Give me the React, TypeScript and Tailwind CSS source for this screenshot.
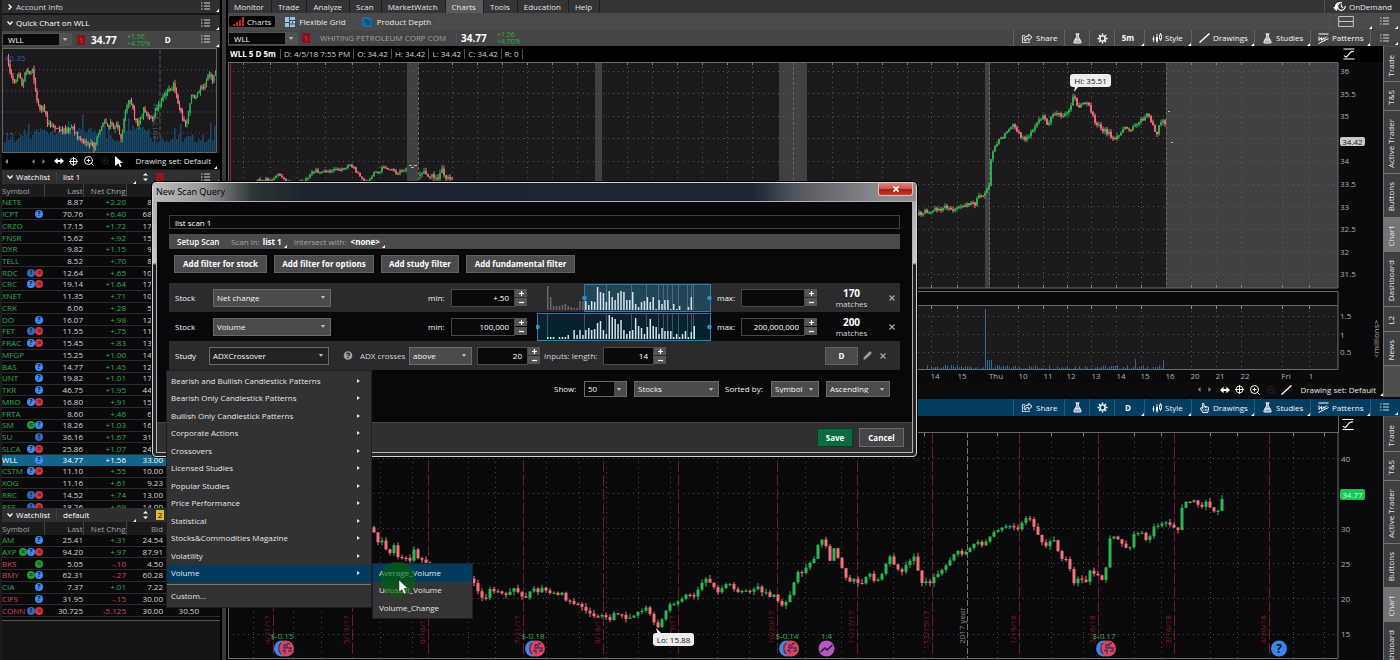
import React, { useState } from 'react';
import { FlaskConical, ZoomIn, Pencil } from 'lucide-react';
import { FaRegHandPointer, FaRegShareSquare, FaQuestionCircle } from 'react-icons/fa';

type Point = [number, number];

interface Quote {
  symbol: string;
  last: string;
  change: string;
  bid: string;
  ask?: string;
  marks?: string;
}

// marks: q = event, p = pending event, r = report, g = split
const LIST_ONE: Quote[] = [
  { symbol: 'NETE', last: '8.87', change: '+2.20', bid: '8.55' },
  { symbol: 'ICPT', last: '70.76', change: '+6.40', bid: '68.10', marks: 'q' },
  { symbol: 'CRZO', last: '17.15', change: '+1.72', bid: '17.00' },
  { symbol: 'FNSR', last: '15.62', change: '+.92', bid: '15.50' },
  { symbol: 'DXR', last: '9.82', change: '+1.15', bid: '9.60' },
  { symbol: 'TELL', last: '8.52', change: '+.70', bid: '8.40' },
  { symbol: 'RDC', last: '12.64', change: '+.65', bid: '10.90', marks: 'pr' },
  { symbol: 'CRC', last: '19.14', change: '+1.64', bid: '17.50', marks: 'qr' },
  { symbol: 'XNET', last: '11.35', change: '+.71', bid: '10.75' },
  { symbol: 'CRK', last: '6.06', change: '+.28', bid: '5.50' },
  { symbol: 'DO', last: '16.07', change: '+.98', bid: '12.50', marks: 'q' },
  { symbol: 'FET', last: '11.55', change: '+.75', bid: '11.00', marks: 'pr' },
  { symbol: 'FRAC', last: '15.45', change: '+.83', bid: '13.50', marks: 'qr' },
  { symbol: 'MFGP', last: '15.25', change: '+1.00', bid: '14.50' },
  { symbol: 'BAS', last: '14.77', change: '+1.45', bid: '12.90', marks: 'q' },
  { symbol: 'UNT', last: '19.82', change: '+1.01', bid: '17.00', marks: 'q' },
  { symbol: 'TKR', last: '46.75', change: '+1.95', bid: '44.00', marks: 'q' },
  { symbol: 'MRO', last: '16.80', change: '+.91', bid: '15.50', marks: 'qr' },
  { symbol: 'FRTA', last: '8.60', change: '+.46', bid: '6.80' },
  { symbol: 'SM', last: '18.26', change: '+1.03', bid: '16.50', marks: 'gq' },
  { symbol: 'SU', last: '36.16', change: '+1.67', bid: '31.50', marks: 'p' },
  { symbol: 'SLCA', last: '25.86', change: '+1.07', bid: '24.50', marks: 'qr' },
  { symbol: 'WLL', last: '34.77', change: '+1.56', bid: '33.00', marks: 'q' },
  { symbol: 'CSTM', last: '11.10', change: '+.55', bid: '10.00', marks: 'qr' },
  { symbol: 'XOG', last: '11.16', change: '+.61', bid: '9.23' },
  { symbol: 'RRC', last: '14.52', change: '+.74', bid: '13.00', marks: 'pr' },
  { symbol: 'RES', last: '18.26', change: '+.69', bid: '14.00', marks: 'pr' },
];

const LIST_DEFAULT: Quote[] = [
  { symbol: 'AM', last: '25.41', change: '+.31', bid: '24.54', marks: 'q' },
  { symbol: 'AXP', last: '94.20', change: '+.97', bid: '87.91', marks: 'gqr' },
  { symbol: 'BKS', last: '5.05', change: '-.10', bid: '4.50', marks: 'g' },
  { symbol: 'BMY', last: '62.31', change: '-.27', bid: '60.28', marks: 'gq' },
  { symbol: 'CIA', last: '7.37', change: '+.01', bid: '7.22', marks: 'q' },
  { symbol: 'CIFS', last: '31.95', change: '-.15', bid: '30.00', marks: 'q' },
  { symbol: 'CONN', last: '30.725', change: '-5.125', bid: '30.00', ask: '30.50', marks: 'pr' },
];

const STUDY_GROUPS = [
  'Bearish and Bullish Candlestick Patterns', 'Bearish Only Candlestick Patterns',
  'Bullish Only Candlestick Patterns', 'Corporate Actions', 'Crossovers', 'Licensed Studies',
  'Popular Studies', 'Price Performance', 'Statistical', 'Stocks&Commodities Magazine',
  'Volatility', 'Volume',
];

const MAIN_TABS = ['Monitor', 'Trade', 'Analyze', 'Scan', 'MarketWatch', 'Charts', 'Tools', 'Education', 'Help'];

const QUICK_PATH: Point[] = [
  [7, 60], [10, 70], [14, 80], [18, 75], [22, 84], [26, 70], [29, 76], [32, 67], [35, 90], [38, 102], [41, 112],
  [44, 106], [48, 126], [52, 124], [57, 128], [60, 133], [66, 130], [72, 128], [78, 138], [84, 144], [90, 143],
  [95, 148], [98, 135], [104, 124], [110, 125], [118, 128], [121, 137], [124, 122], [127, 107], [131, 98],
  [134, 118], [138, 125], [144, 110], [148, 115], [152, 122], [156, 110], [162, 98], [168, 88], [174, 86],
  [180, 108], [184, 124], [188, 118], [191, 95], [195, 100], [200, 90], [205, 86], [208, 72], [212, 80], [216, 70],
];

const INTRADAY_LEFT: Point[] = [
  [254, 181], [262, 180], [272, 180], [278, 174], [282, 178], [290, 184], [305, 181], [312, 172], [318, 171],
  [330, 170], [345, 169], [350, 164], [354, 168], [360, 177], [366, 181], [374, 173], [382, 169], [390, 169],
  [396, 173], [407, 170],
];
const INTRADAY_MID: Point[] = [[418, 176], [425, 173], [432, 176], [438, 178], [442, 171], [446, 177], [452, 178]];
const INTRADAY_RIGHT: Point[] = [
  [917, 214], [924, 212], [932, 210], [945, 207], [955, 210], [965, 206], [975, 203], [982, 194], [986, 193],
  [989, 185], [991, 160], [995, 147], [1000, 140], [1005, 135], [1012, 124], [1018, 132], [1024, 141], [1030, 135],
  [1036, 124], [1042, 116], [1047, 125], [1053, 114], [1057, 111], [1062, 120], [1066, 113], [1070, 108],
  [1073, 96], [1078, 107], [1083, 102], [1089, 103], [1094, 120], [1100, 127], [1108, 133], [1116, 139],
  [1122, 133], [1127, 127], [1132, 130], [1138, 122], [1143, 118], [1148, 115], [1152, 124], [1157, 133],
  [1162, 119], [1166, 126],
];

const DAILY_PATH: Point[] = [
  [370, 526], [374, 533], [378, 541], [382, 542], [386, 550], [390, 553], [394, 546], [398, 556], [410, 561],
  [414, 550], [418, 558], [440, 570], [470, 578], [474, 583], [478, 592], [482, 599], [486, 597], [490, 588],
  [494, 590], [500, 593], [506, 594], [514, 587], [520, 596], [526, 598], [530, 592], [534, 588], [540, 595],
  [542, 589], [548, 592], [556, 595], [562, 593], [568, 602], [576, 604], [584, 608], [592, 614], [597, 617],
  [603, 615], [610, 621], [614, 614], [622, 615], [627, 618], [633, 616], [640, 611], [646, 608], [652, 616],
  [656, 626], [660, 626], [664, 614], [668, 607], [672, 603], [680, 602], [686, 595], [690, 595], [696, 596],
  [700, 583], [706, 580], [711, 582], [714, 588], [719, 592], [724, 586], [732, 584], [736, 592], [744, 590],
  [750, 592], [757, 585], [763, 592], [770, 596], [776, 596], [780, 606], [784, 605], [788, 602], [790, 596],
  [793, 583], [798, 573], [804, 571], [808, 564], [814, 560], [818, 545], [822, 541], [826, 545], [830, 560],
  [832, 545], [835, 552], [840, 560], [843, 573], [850, 582], [856, 579], [860, 587], [866, 577], [870, 575],
  [876, 582], [882, 575], [886, 564], [890, 556], [895, 565], [900, 574], [906, 565], [914, 558], [917, 565],
  [921, 582], [930, 583], [938, 573], [945, 568], [952, 557], [956, 551], [964, 555], [970, 548], [976, 542],
  [984, 545], [990, 537], [996, 531], [1002, 529], [1008, 526], [1018, 530], [1024, 518], [1030, 518], [1036, 530],
  [1044, 545], [1048, 547], [1052, 537], [1058, 550], [1062, 560], [1065, 555], [1070, 569], [1074, 582],
  [1080, 576], [1086, 583], [1090, 571], [1098, 575], [1103, 580], [1107, 562], [1109, 538], [1115, 535],
  [1122, 545], [1130, 548], [1134, 535], [1140, 531], [1148, 542], [1154, 527], [1162, 525], [1168, 521],
  [1174, 528], [1178, 530], [1183, 503], [1190, 503], [1196, 500], [1200, 507], [1206, 502], [1211, 510],
  [1216, 513], [1220, 506], [1224, 495],
];

const EXPIRATIONS: [number, string][] = [
  [273, '4/21/17'], [352, '5/19/17'], [428, '6/16/17'], [523, '7/21/17'], [603, '8/18/17'], [678, '9/15/17'],
  [777, '10/20/17'], [857, '11/17/17'], [932, '12/15/17'], [1019, '1/19/18'], [1098, '2/16/18'],
  [1174, '3/16/18'], [1269, '4/20/18'],
];

const EARNINGS: [number, string][] = [[284, '$-0.15'], [535, '$-0.18'], [789, '$-0.14'], [1106, '$-0.17']];

const HIST_NET = [
  24, 13, 4, 4, 4, 5, 6, 4, 3, 2, 2, 9, 9, 9, 5, 9, 8, 23, 18, 17, 8, 19, 13, 10, 17, 19, 18, 10, 10, 18, 6, 3,
  8, 9, 13, 8, 13, 1, 10, 6, 10, 10, 1, 6, 1, 4, 0, 0, 3, 13,
];
const HIST_VOLUME = [
  2, 2, 2, 0, 2, 2, 2, 4, 0, 9, 4, 9, 4, 9, 11, 9, 10, 16, 18, 9, 5, 24, 22, 20, 15, 19, 9, 5, 8, 9, 21, 13, 11,
  5, 12, 20, 13, 12, 5, 11, 8, 8, 8, 2, 5, 2, 5, 8, 2, 7, 13,
];

const noise = (n: number) => {
  const v = Math.sin(n * 12.9898) * 43758.5453;
  return v - Math.floor(v);
};

const sample = (path: Point[], x: number) => {
  const i = path.findIndex(p => p[0] >= x);
  if (i <= 0) return path[i === 0 ? 0 : path.length - 1][1];
  const [x0, y0] = path[i - 1];
  const [x1, y1] = path[i];
  return y0 + ((y1 - y0) * (x - x0)) / (x1 - x0);
};

interface CandlesProps {
  path: Point[];
  step: number;
  width: number;
  wick: number;
  jitter: number;
}

const Candles: React.FC<CandlesProps> = ({ path, step, width, wick, jitter }) => {
  const start = path[0][0];
  const count = Math.floor((path[path.length - 1][0] - start) / step);
  const price = (x: number) => sample(path, x) + (noise(x) - 0.5) * jitter;
  return (
    <g>
      {Array.from({ length: count }, (_, i) => {
        const x = start + (i + 1) * step;
        const open = price(x - step);
        const close = price(x);
        const top = Math.min(open, close);
        const bottom = Math.max(open, close);
        const color = close <= open ? '#2fb552' : '#f2727a';
        return (
          <g key={x}>
            <line x1={x} x2={x} y1={top - noise(x + 3) * wick} y2={bottom + noise(x + 7) * wick} stroke={color} />
            <rect x={x - width / 2} y={top} width={width} height={Math.max(1.2, bottom - top)} fill={color} />
          </g>
        );
      })}
    </g>
  );
};

const ListIcon = () => (
  <svg viewBox="0 0 9 8" className="h-[8px] w-[9px] shrink-0" stroke="#d4d4d4" strokeWidth="1">
    <path d="M0 1h1.5M3 1h6M0 4h1.5M3 4h6M0 7h1.5M3 7h6" />
  </svg>
);

const Corner = () => (
  <svg viewBox="0 0 3 3" className="h-[3px] w-[3px] shrink-0 self-end" fill="#fff">
    <path d="M3 0v3H0z" />
  </svg>
);

const ListMenu = () => (
  <button aria-label="Panel menu" className="flex h-full w-[18px] shrink-0 items-center justify-between pb-px">
    <ListIcon />
    <Corner />
  </button>
);

const Caret = () => (
  <svg viewBox="0 0 6 4" className="h-[3px] w-[6px]" fill="#b5b5b5">
    <path d="M0 0h6L3 4z" />
  </svg>
);

const Chevron = ({ open }: { open?: boolean }) => (
  <svg viewBox="0 0 6 6" className="h-[6px] w-[6px] shrink-0" fill="none" stroke="#fff" strokeWidth="1.3">
    <path d={open ? 'M.5 1.5L3 4.2 5.5 1.5' : 'M1.5.5L4.2 3 1.5 5.5'} />
  </svg>
);

const GearIcon = () => (
  <svg viewBox="0 0 12 12" className="h-[11px] w-[11px]" fill="none" stroke="#fff">
    <circle cx="6" cy="6" r="2.800" strokeWidth="1.500" />
    <path d="M6 .5v2M6 9.500v2M.5 6h2M9.500 6h2M2.100 2.100l1.500 1.500M8.400 8.400l1.500 1.500M2.100 9.900l1.500-1.500M8.400 3.600l1.500-1.500" strokeWidth="1.500" />
  </svg>
);

const CandleIcon = () => (
  <svg viewBox="0 0 10 10" className="h-[10px] w-[10px]" fill="#fff" stroke="#fff">
    <path d="M1.5 3v6M5 1v9M8.500 0v8" strokeWidth=".8" fill="none" />
    <path d="M.7 5h1.600v2H.7zM4 4h2v4H4z" stroke="none" />
    <rect x="7.400" y="2" width="2.200" height="4" fill="#4a4a4a" strokeWidth=".8" />
  </svg>
);

const LineIcon = () => (
  <svg viewBox="0 0 11 10" className="h-[10px] w-[11px]" stroke="#fff" strokeWidth="1.400">
    <path d="M.5 9.500L10.500.5" />
  </svg>
);

const PatternIcon = () => (
  <svg viewBox="0 0 11 11" className="h-[11px] w-[11px]" fill="none" stroke="#fff" strokeWidth="1">
    <path d="M.5 1h10M.5 10.500L10.500 5.500M1 3.500v4l2.500-3v3l2.500-3v2l3-3" />
  </svg>
);

const CurveIcon = () => (
  <svg viewBox="0 0 12 12" className="h-[12px] w-[12px]" fill="none" stroke="#fff" strokeWidth="1.200">
    <path d="M.5 1h11M.5 11h11M1 7.500c2 2.500 3.500 1 5-1.500s2.500-3 5-2.500" />
  </svg>
);

const Signal = () => (
  <svg viewBox="0 0 11 9" className="h-[9px] w-[11px]" fill="#d0202a">
    <path d="M0 7h2v2H0zM3 5h2v4H3zM6 3h2v6H6zM9 0h2v9H9z" />
  </svg>
);

const NavIcons = ({ cursor }: { cursor?: boolean }) => (
  <div className="flex items-center gap-[5px] text-white">
    <svg viewBox="0 0 13 5" className="mr-[4px] h-[5px] w-[13px]" fill="#8a8a8c">
      <path d="M2.500 0v5L0 2.500zM10.500 0v5L13 2.500z" />
    </svg>
    <svg viewBox="0 0 11 8" className="h-[8px] w-[10px]" fill="#fff">
      <path d="M0 4l4-3.500v2.300h3V.5L11 4 7 7.500V5.200H4v2.300z" />
    </svg>
    <svg viewBox="0 0 10 10" className="h-[9px] w-[9px]" fill="none" stroke="#fff">
      <circle cx="5" cy="5" r="3.800" />
      <path d="M5 0v10M0 5h10" />
    </svg>
    <ZoomIn className="h-[12px] w-[12px]" />
    <ZoomIn className="h-[10px] w-[10px] text-neutral-800" />
    {cursor ? (
      <svg viewBox="0 0 8 11" className="h-[11px] w-[8px]" fill="#fff"><path d="M0 0l8 7H5l1.500 3.500-1.500.5-1.600-3.500L0 10z" /></svg>
    ) : <LineIcon />}
  </div>
);

const MARK_FILL: Record<string, string> = { q: '#3f8df0', p: '#3268c0', r: '#cf3640', g: '#239a35' };
const MARK_TEXT: Record<string, string> = { q: '?', p: '!', r: '≡', g: '≡' };

const Marks = ({ marks }: { marks: string }) => (
  <span className="flex justify-end">
    {marks.split('').map(m => (
      <svg key={m} viewBox="0 0 8 8" className="h-[8px] w-[8px]">
        <circle cx="4" cy="4" r="4" fill={MARK_FILL[m]} />
        <text x="4" y="6.300" textAnchor="middle" className="text-[7px] font-bold" fill="#0b1830">{MARK_TEXT[m]}</text>
      </svg>
    ))}
  </span>
);

const SymbolBox = ({ label }: { label: string }) => (
  <div className="flex h-[13px] w-[70px] items-center border border-neutral-600 bg-[#0a0a0b]">
    <input aria-label={label} defaultValue="WLL" className="w-full min-w-0 bg-transparent px-[5px] text-[8px] leading-none text-white outline-none" />
    <button aria-label="Symbol list" className="flex h-full w-[12px] shrink-0 items-center justify-center bg-neutral-600"><Caret /></button>
  </div>
);

const Change = () => (
  <div className="text-[7px] leading-[7px] text-[#2fae4c]">
    <div>+1.56</div>
    <div>+4.70%</div>
  </div>
);

const Badge = () => (
  <span className="flex h-[10px] w-[8px] items-center justify-center bg-[#8d0f18] text-[8px] leading-none text-[#e0404a]">1</span>
);

interface WatchlistProps {
  name: string;
  quotes: Quote[];
  bodyClass: string;
  tableClass: string;
  badge: React.ReactNode;
}

const Watchlist: React.FC<WatchlistProps> = ({ name, quotes, bodyClass, tableClass, badge }) => (
  <section>
    <div className="flex h-[14px] items-center bg-[#2f2f31] pl-[5px] pr-px text-white">
      <Chevron open />
      <span className="ml-[3px] w-[41px] border-r border-neutral-700">Watchlist</span>
      <span className="ml-[6px] w-[70px]">{name}</span>
      <Corner />
      <svg viewBox="0 0 5 10" className="ml-[7px] h-[10px] w-[5px]" fill="#fff"><path d="M0 3.500h5L2.500 1zM0 6.500h5L2.500 9z" /></svg>
      <span className="ml-[8px] flex-1">{badge}</span>
      <ListMenu />
    </div>
    <div className={bodyClass}>
      <table className={tableClass}>
        <thead>
          <tr className="h-[13px] bg-[#1b1b1d] text-neutral-400">
            <th className="w-[42px] border-r border-neutral-700 text-left font-normal">Symbol</th>
            <th className="w-[39px] border-r border-neutral-700 text-right font-normal">Last</th>
            <th className="w-[43px] border-r border-neutral-700 text-right font-normal">Net Chng</th>
            <th className="w-[37px] text-right font-normal">Bid</th>
            <th className="w-[36px]" />
            <th />
          </tr>
        </thead>
        <tbody>
          {quotes.map(q => {
            const selected = q.symbol === 'WLL';
            const down = q.change.startsWith('-');
            const tone = selected ? 'text-white' : down ? 'text-[#d8474e]' : 'text-[#38a84e]';
            return (
              <tr key={q.symbol} className={selected ? 'bg-[#136689] text-white' : 'border-b border-[#2c2c2e] text-[#d6d6d6]'}>
                <td className={tone}>
                  <span className="flex items-center justify-between pr-px">{q.symbol}{q.marks && <Marks marks={q.marks} />}</span>
                </td>
                <td className="text-right">{q.last}</td>
                <td className={`text-right ${tone}`}>{q.change}</td>
                <td className="text-right">{q.bid}</td>
                <td className="text-right">{q.ask}</td>
                <td />
              </tr>
            );
          })}
        </tbody>
      </table>
    </div>
  </section>
);

const QuickChart = () => (
  <svg viewBox="2 48 215 105" className="block h-auto w-full bg-[#1b191c]">
    {[70, 91, 112, 133].map(y => <line key={y} x1="3" x2="216" y1={y} y2={y} stroke="#4c4c50" strokeDasharray="1 3" />)}
    <line x1="160" x2="160" y1="49" y2="152" stroke="#55555a" strokeDasharray="5 2" />
    {Array.from({ length: 106 }, (_, i) => {
      const h = 9 + noise(i + 2) * 9 + (i > 14 && i < 50 ? 8 : 0) + (i > 58 && i < 72 ? 12 : 0) + (noise(i * 3) > 0.9 ? 12 : 0);
      return <rect key={i} x={4 + i * 2} y={152 - h} width="1.600" height={h} fill="#15496c" />;
    })}
    <text x="5" y="61" fill="#2c5fae" className="text-[8px]">40.35</text>
    <text x="5" y="138" fill="#2c5fae" className="text-[8px]">15</text>
    <text transform="translate(158 140) rotate(-90)" fill="#4e6474" className="text-[8px]">2017 year</text>
    <Candles path={QUICK_PATH} step={1.5} width={1.2} wick={4} jitter={6} />
    <path d="M2.500 48.500h214v104H2.500z" fill="none" stroke="#66666a" />
  </svg>
);

const Sidebar = () => (
  <aside className="flex w-[220px] shrink-0 flex-col border-l-2 border-[#1c1c1e] bg-[#151517]">
    <div className="flex h-[13px] items-center bg-[#2f2f31] pl-[5px] pr-px text-neutral-300">
      <Chevron />
      <span className="ml-[3px] flex-1">Account Info</span>
      <ListMenu />
    </div>
    <div className="mt-[2px] flex h-[16px] items-center bg-[#2f2f31] pl-[5px] pr-px text-white">
      <Chevron open />
      <span className="ml-[3px] flex-1">Quick Chart on WLL</span>
      <ListMenu />
    </div>
    <div className="flex h-[17px] items-center bg-[#454547] pr-px">
      <SymbolBox label="Quick chart symbol" />
      <span className="ml-[5px]"><Badge /></span>
      <span className="ml-[6px] w-[36px] text-[10px] font-bold leading-none text-white">34.77</span>
      <Change />
      <button className="ml-[14px] flex-1 text-left font-bold text-white">D</button>
      <ListMenu />
    </div>
    <div className="pr-[3px]"><QuickChart /></div>
    <div className="mb-px flex h-[16px] items-center justify-between bg-black pl-[3px] pr-[3px]">
      <svg viewBox="0 0 3 5" className="h-[5px] w-[3px]" fill="#8a8a8c"><path d="M3 0v5L0 2.500z" /></svg>
      <span className="ml-[24px] flex-1"><NavIcons cursor /></span>
      <span className="flex items-center gap-[3px] self-stretch text-neutral-200">Drawing set: Default<Corner /></span>
    </div>
    <Watchlist
      name="list 1"
      quotes={LIST_ONE}
      bodyClass="h-[324px] overflow-hidden"
      tableClass="h-[329px] w-full table-fixed border-collapse bg-[#0a0a0c]"
      badge={<span className="block h-[8px] w-[8px] bg-[#9a131c]" />}
    />
    <Watchlist
      name="default"
      quotes={LIST_DEFAULT}
      bodyClass="border-b border-neutral-600 bg-[#0a0a0c] pb-[3px]"
      tableClass="h-[95px] w-full table-fixed border-collapse"
      badge={<span className="flex h-[10px] w-[8px] items-center justify-center bg-[#e9b92c] text-black">2</span>}
    />
  </aside>
);

const TopBars = () => (
  <header>
    <nav className="flex h-[13px] items-center justify-between bg-[#343436]">
      <div className="flex h-full">
        {MAIN_TABS.map(tab => (
          <button key={tab} className={`flex h-full items-center border-r border-[#1f1f20] pl-[6px] pr-[7px] text-neutral-200 ${tab === 'Charts' ? 'bg-[#5a5a5c]' : ''}`}>
            {tab}
          </button>
        ))}
      </div>
      <button className="flex h-full items-center gap-[3px] border-l border-neutral-600 px-[8px] text-neutral-200">
        <svg viewBox="0 0 14 12" className="h-[11px] w-[13px]" fill="none" stroke="#fff" strokeWidth="1.200">
          <circle cx="9" cy="6" r="4.200" strokeDasharray="20 5" />
          <path d="M9 3.500V6l2 1.500" />
          <path d="M0 7l3.500 4L6 6.500H4.500C4.500 4 6 1.500 8 1 4 1 2 3.500 2 6.500z" fill="#fff" stroke="none" />
        </svg>
        OnDemand
      </button>
    </nav>
    <div className="flex h-[17px] items-center justify-between bg-[#4a4a4c] text-neutral-200">
      <div className="flex items-center">
        <button className="ml-px flex h-[11px] items-center gap-[3px] rounded-[2px] bg-black px-[4px]"><Signal />Charts</button>
        <button className="ml-[10px] flex items-center gap-[4px]">
          <svg viewBox="0 0 10 10" className="h-[10px] w-[10px]" fill="#8fc4ee"><path d="M0 0h4v5H0zM5 0h5v3H5zM0 6h4v4H0zM5 4h2.300v2.500H5zM8 4h2v2.500H8zM5 7.500h5V10H5z" /></svg>
          Flexible Grid
        </button>
        <button className="ml-[16px] flex items-center gap-[5px] border-r border-neutral-600 pr-[7px]">
          <svg viewBox="0 0 10 10" className="h-[10px] w-[10px]" fill="#1c6a9c" stroke="#0b3855"><path d="M0 0h10v10H0z" stroke="none" /><path d="M2 3h4M2 5h6M4 7h4" /></svg>
          Product Depth
        </button>
      </div>
      <div className="flex h-full items-center pr-[2px]">
        <button aria-label="Layout" className="mr-[8px] flex h-full w-[43px] items-center justify-between border-l border-neutral-600 pb-px pl-[8px]">
          <svg viewBox="0 0 17 12" className="h-[11px] w-[16px]" fill="none" stroke="#d0d0d0"><path d="M.5.5h16v11H.5zM.5 6h16" /></svg>
          <Corner />
        </button>
        <ListMenu />
      </div>
    </div>
  </header>
);

const Tool = ({ icon, label, corner, width }: { icon?: React.ReactNode; label?: string; corner?: boolean; width: string }) => (
  <button aria-label={label ?? 'Tool'} className={`flex h-full items-center gap-[3px] border-l border-white/15 pl-[7px] ${width}`}>
    {icon}
    <span className="flex-1 text-left">{label}</span>
    {corner && <Corner />}
  </button>
);

const ChartTools = ({ period, hand }: { period: string; hand?: boolean }) => (
  <div className="flex h-full items-center text-neutral-100">
    <Tool icon={<FaRegShareSquare className="h-[9px] w-[12px]" />} label="Share" width="w-[51px]" />
    <button aria-label="Studies lab" className="flex h-full w-[25px] items-center justify-center border-l border-white/15">
      <FlaskConical className="h-[11px] w-[11px]" fill="currentColor" fillOpacity="0.6" />
    </button>
    <button aria-label="Settings" className="flex h-full w-[25px] items-center justify-center border-l border-white/15">
      <GearIcon />
    </button>
    <button className="flex h-full w-[30px] items-center border-l border-white/15 font-bold">
      <span className="flex-1">{period}</span><Corner />
    </button>
    <Tool icon={<CandleIcon />} label="Style" corner width="w-[47px]" />
    <Tool icon={hand ? <FaRegHandPointer className="h-[10px] w-[11px]" /> : <LineIcon />} label="Drawings" corner width="w-[63px]" />
    <Tool icon={<FlaskConical className="h-[11px] w-[11px]" fill="currentColor" fillOpacity="0.6" />} label="Studies" corner width="w-[56px]" />
    <Tool icon={<PatternIcon />} label="Patterns" corner width="w-[60px]" />
    <span className="flex h-full w-[30px] items-center justify-end border-l border-white/15 pr-[2px]"><ListMenu /></span>
  </div>
);

const RAIL: [string, string][] = [
  ['Trade', 'h-[35px]'], ['T&S', 'h-[29px]'], ['Active Trader', 'h-[63px]'], ['Buttons', 'h-[44px]'],
  ['Chart', 'h-[34px]'], ['Dashboard', 'h-[55px]'], ['L2', 'h-[25px]'], ['News', 'h-[34px]'],
];

const Rail = () => (
  <nav className="flex w-[17px] shrink-0 flex-col border-l border-neutral-500 bg-[#4e4e50] pt-px">
    {RAIL.map(([name, height]) => (
      <button
        key={name}
        className={`flex w-full shrink-0 items-center justify-center border-b border-neutral-500 pr-[3px] pt-[3px] text-neutral-200 ${height} ${name === 'Chart' ? 'bg-[#747476]' : 'bg-[#3f3f41]'}`}
      >
        <span className="rotate-180 [writing-mode:vertical-rl]">{name}</span>
      </button>
    ))}
  </nav>
);

const PRICES: [number, string][] = [
  [71, '36'], [94, '35.5'], [116, '35'], [161, '34'], [184, '33.5'], [207, '33'], [229, '32.5'], [252, '32'], [274, '31.5'],
];
const HOURS: [number, string][] = [
  [935, '14'], [962, '15'], [996, 'Thu'], [1023, '10'], [1048, '11'], [1071, '12'], [1096, '13'], [1121, '14'],
  [1145, '15'], [1170, '16'], [1195, '20'], [1220, '21'], [1245, '22'], [1286, 'Fri'], [1311, '1'],
];
const INTRADAY_GRID = [
  243, 270, 297, 325, 352, 379, 452, 477, 502, 527, 552, 577, 627, 652, 677, 702, 727, 752, 832, 857, 882, 907, 931,
  957, 1018, 1043, 1067, 1091, 1116, 1141, 1191, 1216, 1241, 1282, 1309,
];

const IntradayChart = () => (
  <svg viewBox="228 62 1155 320" className="block h-auto w-full bg-[#0a0a0c]">
    <rect x="228" y="62" width="1110" height="226" fill="#1c1a1d" />
    <rect x="228" y="306" width="1110" height="63" fill="#1c1a1d" />
    <g fill="#414143">
      <path d="M407 62h11v226h-11zM595 62h7v226h-7zM779 62h28v226h-28zM985 62h5v226h-5zM1166 62h172v226h-172z" />
    </g>
    <g stroke="#58585a" strokeDasharray="1 4">
      {[71.5, 93.5, 116.5, 138.5, 161.5, 184.5, 206.5, 229.5, 252.5, 274.5, 316.5, 334.5, 352.5].map(y => (
        <line key={y} x1="228" x2="1338" y1={y} y2={y} />
      ))}
      {INTRADAY_GRID.map(x => (
        <path key={x} d={`M${x + 0.5} 62v226M${x + 0.5} 306v63`} />
      ))}
    </g>
    <g stroke="#8a8a8c">
      {INTRADAY_GRID.map(x => <path key={x} d={`M${x + 0.5} 62v3M${x + 0.5} 285v3M${x + 0.5} 306v3`} />)}
      <path d="M1166.500 62v226M989.500 62v226M418.500 62v120M793.500 62v226" strokeDasharray="3 2" stroke="#666" />
    </g>
    <line x1="230.500" x2="230.500" y1="62" y2="369" stroke="#8f1f28" />
    {Array.from({ length: 120 }, (_, i) => {
      const x = 925 + i * 2;
      const h = x === 985 ? 60 : x >= 1163 ? (x === 1165 ? 28 : 9) : x === 1135 ? 10 : x > 985 && x < 992 ? 9 : noise(i) * 4;
      return <rect key={i} x={x} y={369 - h} width="1" height={h} fill="#2a6d9c" />;
    })}
    <path d="M228.500 62v307M228 62.500h1110v225.500H228M228 291.500h1110V369.500H228M228 305.500h1110" fill="none" stroke="#6a6a6c" />
    <Candles path={INTRADAY_LEFT} step={2} width={1.6} wick={2} jitter={4} />
    <Candles path={INTRADAY_MID} step={2} width={1.6} wick={4} jitter={5} />
    <Candles path={INTRADAY_RIGHT} step={2} width={1.8} wick={3} jitter={5} />
    <path d="M409 165.500h3M414 165.500h3M411 167.500h3M1168 111.500h2M1171 142.500h2" stroke="#b8b8b8" />
    <g fill="#b0b0b2" className="text-[8px]">
      {PRICES.map(([y, label]) => <text key={y} x="1340" y={y + 3}>{label}</text>)}
      <text x="1340" y="319">1.5</text>
      <text x="1340" y="338">1</text>
      <text x="1340" y="355">0.5</text>
      <text transform="translate(1379 358) rotate(-90)">&lt;millions&gt;</text>
      {HOURS.map(([x, label]) => <text key={x} x={x} y="379" textAnchor="middle">{label}</text>)}
    </g>
    <rect x="1340" y="137" width="25" height="9" rx="2" fill="#c9c9c9" />
    <text x="1352.500" y="144.500" textAnchor="middle" fill="#222" className="text-[8px]">34.42</text>
    <path d="M1074 92l1-6h4z" fill="#fff" />
    <rect x="1070" y="74" width="41" height="13" rx="3" fill="#ededed" />
    <text x="1090.500" y="83.500" textAnchor="middle" fill="#111" className="text-[8px]">Hi: 35.51</text>
  </svg>
);

const DAILY_GRID = [
  253, 293, 321, 380, 412, 468, 495, 546, 579, 606, 638, 670, 717, 749, 805, 841, 893, 924, 997, 1051, 1083, 1134,
  1161, 1210, 1237, 1293, 1324,
];

const DailyChart = () => (
  <svg viewBox="228 416 1155 243" className="block h-auto w-full bg-[#0a0a0c]">
    <g stroke="#4a4a4c" strokeDasharray="1 4">
      {[458.5, 493.5, 528.5, 563.5, 598.5, 634.5].map(y => <line key={y} x1="228" x2="1338" y1={y} y2={y} />)}
      {DAILY_GRID.map(x => <line key={x} x1={x + 0.5} x2={x + 0.5} y1="432" y2="658" />)}
    </g>
    <path d="M967.500 432v227" stroke="#77777a" strokeDasharray="6 2" />
    {EXPIRATIONS.map(([x, date]) => (
      <g key={x}>
        <line x1={x + 0.5} x2={x + 0.5} y1="433" y2="658" stroke="#741a2b" strokeDasharray="11 3" />
        <text transform={`translate(${x - 3} 644) rotate(-90)`} fill="#8a1822" className="text-[8px]">{date}</text>
      </g>
    ))}
    <text transform="translate(965 644) rotate(-90)" fill="#8a8a8c" className="text-[8px]">2017 year</text>
    <path d="M228.500 432v227M228 432.500h1110V658.500H228M1338.500 416v17" fill="none" stroke="#6a6a6c" />
    {DAILY_GRID.map(x => <path key={x} d={`M${x + 0.5} 433v3`} stroke="#8a8a8c" />)}
    <Candles path={DAILY_PATH} step={4} width={3} wick={4} jitter={3} />
    {EARNINGS.map(([x, label]) => (
      <g key={x}>
        <circle cx={x - 2} cy="648.500" r="8" fill="#3f86e6" />
        <circle cx={x + 2} cy="648.500" r="8" fill="#d9475a" />
        <path d={`M${x - 3} 643c-3 3-3 8 0 11M${x + 3} 643.500h3M${x} 645h3v3h-3zM${x + 4} 648h3v3h-3M${x - 2} 650.500h3v3`} stroke="#4a2a66" strokeWidth="1.300" fill="none" />
        <text x={x - 2} y="639" textAnchor="middle" fill="#31b04e" className="text-[8px]">{label}</text>
      </g>
    ))}
    <text x="826.500" y="639" textAnchor="middle" fill="#31b04e" className="text-[8px]">1:4</text>
    <circle cx="826.500" cy="648.500" r="8" fill="#b556c4" />
    <path d="M820.500 652l4.500-4 2 2 5.500-5" fill="none" stroke="#2a0f33" strokeWidth="1.400" />
    <circle cx="1279" cy="648.500" r="8" fill="#3b86ea" />
    <text x="1279" y="653" textAnchor="middle" fill="#0b1226" className="text-[12px] font-bold">?</text>
    <path d="M656 628l2 7h5z" fill="#fff" />
    <rect x="653" y="633" width="41" height="13" rx="3" fill="#ededed" />
    <text x="673.500" y="642.500" textAnchor="middle" fill="#111" className="text-[8px]">Lo: 15.88</text>
    <g fill="#b0b0b2" className="text-[8px]">
      {([[459, '40'], [529, '30'], [564, '25'], [599, '20'], [634, '15']] as [number, string][]).map(([y, label]) => (
        <text key={y} x="1341" y={y + 3}>{label}</text>
      ))}
    </g>
    <rect x="1340" y="489" width="25" height="11" rx="2" fill="#17c653" />
    <text x="1352.500" y="497.500" textAnchor="middle" fill="#d9ffe0" className="text-[8px]">34.77</text>
    <path d="M1342.500 419.500h11M1342.500 429.500h11M1343 426c2 2.500 3.500 1 5-1.500s2.500-3 5-2.500" fill="none" stroke="#fff" strokeWidth="1.200" />
  </svg>
);

const OHLC = ['D: 4/5/18 7:55 PM', 'O: 34.42', 'H: 34.42', 'L: 34.42', 'C: 34.42', 'R: 0'];

const ChartArea = () => (
  <main className="flex min-w-0 flex-1 flex-col">
    <TopBars />
    <div className="flex h-[16px] items-center justify-between bg-[#454547]">
      <div className="flex items-center">
        <SymbolBox label="Chart symbol" />
        <span className="ml-[4px]"><Badge /></span>
        <span className="ml-[10px] w-[137px] border-r border-neutral-600 text-neutral-400">WHITING PETROLEUM CORP COM</span>
        <span className="ml-[4px] w-[36px] text-[10px] font-bold leading-none text-white">34.77</span>
        <Change />
      </div>
      <ChartTools period="5m" />
    </div>
    <div className="flex">
      <div className="min-w-0 flex-1 bg-black">
        <div className="flex h-[16px] items-center justify-between pr-[28px] text-neutral-300">
          <div className="flex">
            <span className="w-[53px] border-r border-neutral-600 pl-[2px] font-bold text-white">WLL 5 D 5m</span>
            {OHLC.map(cell => <span key={cell} className="border-r border-neutral-600 px-[3px]">{cell}</span>)}
          </div>
          <CurveIcon />
        </div>
        <IntradayChart />
        <div className="flex h-[15px] items-center justify-end gap-[8px] bg-[#0c0c0d]">
          <NavIcons />
          <span className="flex h-[12px] items-center gap-[4px] text-neutral-200">Drawing set: Default<Corner /></span>
        </div>
      </div>
      <Rail />
    </div>
    <div className="mt-[2px] flex h-[17px] shrink-0 items-center justify-end bg-[#043e62]">
      <ChartTools period="D" hand />
    </div>
    <div className="flex min-h-0 flex-1">
      <div className="min-w-0 flex-1"><DailyChart /></div>
      <Rail />
    </div>
  </main>
);

const Picker = ({ id, label, value, className }: { id: string; label: string; value: string; className: string }) => (
  <span className={`relative flex items-center border border-[#6a6a6c] ${className}`}>
    <select id={id} aria-label={label} defaultValue={value} className="h-full w-full appearance-none bg-transparent px-[3px] leading-none text-neutral-100 outline-none">
      <option>{value}</option>
    </select>
    <span className="pointer-events-none absolute right-[4px]"><Caret /></span>
  </span>
);

const Stepper = () => (
  <span className="flex w-[12px] flex-col gap-px">
    <button aria-label="Increase" className="flex h-[8px] items-center justify-center bg-[#555557]">
      <svg viewBox="0 0 5 5" className="h-[5px] w-[5px]" stroke="#fff" strokeWidth="1.200"><path d="M0 2.500h5M2.500 0v5" /></svg>
    </button>
    <button aria-label="Decrease" className="flex h-[8px] items-center justify-center bg-[#555557]">
      <svg viewBox="0 0 5 5" className="h-[5px] w-[5px]" stroke="#fff" strokeWidth="1.200"><path d="M0 2.500h5" /></svg>
    </button>
  </span>
);

const NumberBox = ({ id, value, className }: { id: string; value: string; className: string }) => (
  <input id={id} aria-label={id} defaultValue={value} className={`h-[18px] border border-[#48484a] bg-[#0a0a0c] pr-[5px] text-right leading-none text-white outline-none ${className}`} />
);

const RemoveButton = () => (
  <button aria-label="Remove filter" className="flex w-[12px] justify-center">
    <svg viewBox="0 0 6 6" className="h-[6px] w-[6px]" stroke="#a8a8a8" strokeWidth="1.200"><path d="M.5.5l5 5M5.500.5l-5 5" /></svg>
  </button>
);

const Histogram = ({ bars, from, muted }: { bars: number[]; from: number; muted?: boolean }) => (
  <svg viewBox="536 0 176 29" className="ml-[9px] mr-[5px] h-[29px] w-[176px] shrink-0">
    <rect x={from} y="1.500" width={710.5 - from} height="27" fill={muted ? '#1f4557' : '#06222f'} stroke="#2b7eae" />
    <g stroke="#8fb6c6" strokeOpacity=".35">
      {[547, 584, 606, 631, 646, 658, 663, 667, 672, 678, 687, 691, 693].filter(x => x > from).map(x => <path key={x} d={`M${x + 0.5} 2v25`} />)}
    </g>
    {bars.map((h, i) => {
      const x = 547 + i * 2.93;
      return <rect key={i} x={x} y={27 - h} width="1.500" height={h} fill={x < from - 1 ? '#69696b' : '#d5e4ec'} />;
    })}
    <circle cx={from} cy="15" r="2.300" fill="#2f8fc6" />
    <circle cx="709.500" cy="15" r="2.300" fill="#2f8fc6" />
  </svg>
);

interface StockFilterProps {
  id: string;
  field: string;
  min: string;
  max: string;
  matches: string;
  bars: number[];
  from: number;
  striped?: boolean;
}

const StockFilter: React.FC<StockFilterProps> = ({ id, field, min, max, matches, bars, from, striped }) => (
  <div className={`flex h-[29px] items-center pl-[6px] ${striped ? 'bg-[#2b2b2d]' : ''}`}>
    <label htmlFor={`${id}-field`} className="w-[38px]">Stock</label>
    <Picker id={`${id}-field`} label="Stock" value={field} className="h-[18px] w-[118px] bg-[#4b4b4d]" />
    <label htmlFor={`${id}-min`} className="ml-[97px] w-[23px]">min:</label>
    <NumberBox id={`${id}-min`} value={min} className="w-[64px]" />
    <Stepper />
    <Histogram bars={bars} from={from} muted={striped} />
    <label htmlFor={`${id}-max`} className="w-[24px]">max:</label>
    <NumberBox id={`${id}-max`} value={max} className="w-[64px]" />
    <Stepper />
    <div className="w-[69px] text-center">
      <div className="text-[10px] font-bold leading-[12px] text-white">{matches}</div>
      <div className="leading-[9px] text-neutral-300">matches</div>
    </div>
    <RemoveButton />
  </div>
);

const barButton = 'h-[18px] border border-[#616163] bg-[#4b4b4d] font-bold text-white';

const ScanDialog = () => (
  <div role="dialog" aria-label="New Scan Query" className="absolute left-[152px] top-[182px] w-[765px] rounded-[4px] border border-[#d5d5d5] bg-[linear-gradient(180deg,#a9a9ab_0,#c9c9cb_80px,#1b1d21_82px,#26282c_100%)] px-[3px] pb-[3px] shadow-[0_0_0_1px_#000]">
    <div className="-mx-[3px] flex h-[18px] items-center justify-between rounded-t-[3px] bg-[linear-gradient(90deg,#bdbdbf_0,#98989a_50px,#5b5d62_80px,#2c3634_100px,#1d2430_150px,#1d2432_600px,#50555e_640px,#8d8d90_730px)] pl-[3px] pr-[3px]">
      <span className="self-start pt-[4px] text-[9px] leading-none text-black">New Scan Query</span>
      <button aria-label="Close" className="flex h-[13px] w-[35px] items-center justify-center self-start rounded-b-[3px] border border-t-0 border-[#e8b8b0] bg-[linear-gradient(180deg,#d98880_0,#c9544a_50%,#a81b12_55%,#c73a2c_100%)]">
        <svg viewBox="0 0 8 7" className="h-[6px] w-[8px]" stroke="#fff" strokeWidth="2"><path d="M1 .5l6 6M7 .5l-6 6" /></svg>
      </button>
    </div>
    <div className="border border-[#b0b0b2] bg-[#08080a] text-neutral-100">
      <div className="px-[12px] pt-[13px]">
        <input aria-label="Scan name" defaultValue="list scan 1" className="block h-[14px] w-full border border-[#3e3e40] bg-[#0b0b0d] px-[5px] leading-none text-white outline-none" />
        <div className="mt-[5px] flex h-[15px] items-center bg-[#4a4a4c] pl-[8px]">
          <span className="w-[54px] font-semibold text-white">Setup Scan</span>
          <span className="mr-[3px] text-neutral-400">Scan in:</span>
          <b className="mr-[2px] text-white">list 1</b>
          <span className="flex h-[13px]"><Corner /></span>
          <span className="ml-[7px] mr-[4px] text-neutral-400">Intersect with:</span>
          <b className="mr-[2px] text-white">&lt;none&gt;</b>
          <span className="flex h-[13px]"><Corner /></span>
        </div>
        <div className="mt-[6px] flex gap-[7px] pl-[5px]">
          <button className={`${barButton} w-[93px]`}>Add filter for stock</button>
          <button className={`${barButton} w-[100px]`}>Add filter for options</button>
          <button className={`${barButton} w-[78px]`}>Add study filter</button>
          <button className={`${barButton} w-[109px]`}>Add fundamental filter</button>
        </div>
        <div className="mt-[10px]">
          <StockFilter id="net" field="Net change" min="+.50" max="" matches="170" bars={HIST_NET} from={584.5} striped />
          <StockFilter id="volume" field="Volume" min="100,000" max="200,000,000" matches="200" bars={HIST_VOLUME} from={537.5} />
          <div className="flex h-[29px] items-center bg-[#2b2b2d] pl-[6px]">
            <label htmlFor="study" className="w-[34px]">Study</label>
            <Picker id="study" label="Study" value="ADXCrossover" className="h-[18px] w-[120px] border-[#2c4a74] bg-[#232325]" />
            <FaQuestionCircle className="ml-[14px] h-[9px] w-[10px] text-neutral-400" />
            <label htmlFor="cross" className="ml-[7px] w-[49px] text-neutral-300">ADX crosses</label>
            <Picker id="cross" label="Direction" value="above" className="h-[18px] w-[63px] bg-[#4b4b4d]" />
            <NumberBox id="level" value="20" className="ml-[5px] w-[51px]" />
            <Stepper />
            <label htmlFor="length" className="ml-[4px] w-[59px] text-neutral-300">Inputs: length:</label>
            <NumberBox id="length" value="14" className="w-[51px]" />
            <Stepper />
            <button className={`${barButton} ml-auto w-[33px]`}>D</button>
            <button aria-label="Edit study" className="mx-[5px]"><Pencil className="h-[9px] w-[9px] fill-neutral-400 text-neutral-400" /></button>
            <span className="mr-[11px]"><RemoveButton /></span>
          </div>
        </div>
        <div className="mb-[25px] mt-[11px] flex h-[16px] items-center justify-end pr-[10px]">
          <label htmlFor="show" className="w-[30px]">Show:</label>
          <Picker id="show" label="Show" value="50" className="h-full w-[43px] bg-[linear-gradient(90deg,#0a0a0c_29px,#4b4b4d_29px)]" />
          <Picker id="kind" label="Instrument" value="Stocks" className="ml-[7px] h-full w-[85px] bg-[#4b4b4d]" />
          <label htmlFor="sort" className="ml-[6px] w-[46px]">Sorted by:</label>
          <Picker id="sort" label="Sorted by" value="Symbol" className="h-full w-[48px] bg-[#4b4b4d]" />
          <Picker id="order" label="Order" value="Ascending" className="ml-[7px] h-full w-[64px] bg-[#4b4b4d]" />
        </div>
      </div>
      <div className="flex h-[30px] items-center justify-end gap-[6px] border-t border-[#464648] bg-[#313133] pr-[8px]">
        <button className="h-[19px] w-[36px] border border-[#0c3a22] bg-[#0b6b3e] font-bold text-white">Save</button>
        <button className="h-[19px] w-[45px] border border-[#6a6a6c] bg-[#454547] font-bold text-white">Cancel</button>
      </div>
    </div>
  </div>
);

const StudyMenu = () => {
  const [active, setActive] = useState('Volume');

  return (
    <>
      <div role="menu" className="absolute left-[166px] top-[370px] w-[206px] border border-[#202022] bg-[#323234] pt-px text-neutral-200">
        <div className="grid h-[210px] grid-rows-12">
          {STUDY_GROUPS.map(group => (
            <button
              key={group}
              role="menuitem"
              onMouseEnter={() => setActive(group)}
              className={`flex items-center justify-between pl-[4px] pr-[11px] ${active === group ? 'bg-[#023b60]' : ''}`}
            >
              {group}
              <svg viewBox="0 0 3 4" className="h-[4px] w-[3px]" fill="#ddd"><path d="M0 0l3 2-3 2z" /></svg>
            </button>
          ))}
        </div>
        <button role="menuitem" className="mt-[2px] flex h-[23px] w-full items-center border-t border-[#7c7476] pl-[4px]">Custom...</button>
      </div>
      <div role="menu" className="absolute left-[372px] top-[563px] grid h-[56px] w-[101px] grid-rows-3 border border-[#202022] bg-[#353537] pb-px text-neutral-200">
        {['Average_Volume', 'Unusual_Volume', 'Volume_Change'].map((name, i) => (
          <button key={name} role="menuitem" className={`flex items-center pl-[6px] ${i === 0 ? 'bg-[#023b60]' : ''}`}>{name}</button>
        ))}
      </div>
      {/* click highlight and pointer */}
      <svg viewBox="0 0 36 36" className="pointer-events-none absolute left-[380px] top-[562px] h-[36px] w-[36px]">
        <circle cx="18" cy="17" r="17.500" fill="#006400" fillOpacity=".6" />
        <path d="M19 18v12l3-2.500 2 4.500 2-1-2-4.500h4z" fill="#fff" stroke="#222" strokeWidth=".5" />
      </svg>
    </>
  );
};

export default function App() {
  return (
    <div className="relative flex h-screen w-full overflow-hidden bg-[#0a0a0c] font-['Open_Sans','Noto_Sans',sans-serif] text-[8px] leading-[10px]">
      <Sidebar />
      <div className="w-[8px] shrink-0 border-x-2 border-black bg-[#39393b]" />
      <ChartArea />
      <ScanDialog />
      <StudyMenu />
    </div>
  );
}
